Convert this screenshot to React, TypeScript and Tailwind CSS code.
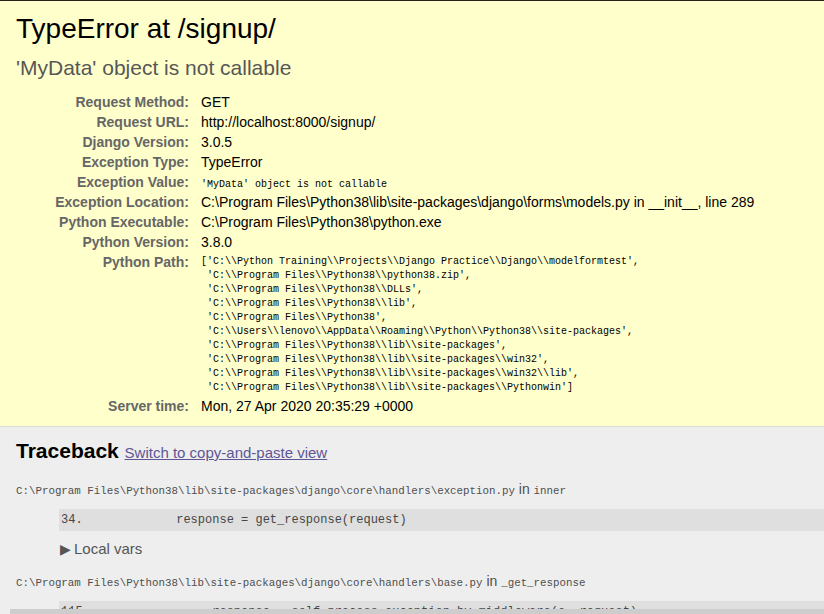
const sans = "font-['Liberation_Sans',Arial,sans-serif]"
const mono = "font-['Liberation_Mono','Courier_New',monospace]"

const summaryRows: { label: string; value: string; mono?: boolean }[] = [
    { label: 'Request Method:', value: 'GET' },
    { label: 'Request URL:', value: 'http://localhost:8000/signup/' },
    { label: 'Django Version:', value: '3.0.5' },
    { label: 'Exception Type:', value: 'TypeError' },
    { label: 'Exception Value:', value: "'MyData' object is not callable", mono: true },
    { label: 'Exception Location:', value: 'C:\\Program Files\\Python38\\lib\\site-packages\\django\\forms\\models.py in __init__, line 289' },
    { label: 'Python Executable:', value: 'C:\\Program Files\\Python38\\python.exe' },
    { label: 'Python Version:', value: '3.8.0' },
]

const pythonPath = [
    "['C:\\\\Python Training\\\\Projects\\\\Django Practice\\\\Django\\\\modelformtest',",
    " 'C:\\\\Program Files\\\\Python38\\\\python38.zip',",
    " 'C:\\\\Program Files\\\\Python38\\\\DLLs',",
    " 'C:\\\\Program Files\\\\Python38\\\\lib',",
    " 'C:\\\\Program Files\\\\Python38',",
    " 'C:\\\\Users\\\\lenovo\\\\AppData\\\\Roaming\\\\Python\\\\Python38\\\\site-packages',",
    " 'C:\\\\Program Files\\\\Python38\\\\lib\\\\site-packages',",
    " 'C:\\\\Program Files\\\\Python38\\\\lib\\\\site-packages\\\\win32',",
    " 'C:\\\\Program Files\\\\Python38\\\\lib\\\\site-packages\\\\win32\\\\lib',",
    " 'C:\\\\Program Files\\\\Python38\\\\lib\\\\site-packages\\\\Pythonwin']",
]

const frames = [
    {
        file: 'C:\\Program Files\\Python38\\lib\\site-packages\\django\\core\\handlers\\exception.py',
        func: 'inner',
        line: '34.',
        code: '             response = get_response(request)',
        vars: true,
    },
    {
        file: 'C:\\Program Files\\Python38\\lib\\site-packages\\django\\core\\handlers\\base.py',
        func: '_get_response',
        line: '115.',
        code: '                 response = self.process_exception_by_middleware(e, request)',
        vars: false,
    },
]

function Row({ label, children }: { label: string; children: React.ReactNode }) {
    return (
        <div className="flex h-[20px] leading-[20px]">
            <div className="w-[189px] shrink-0 text-right font-bold text-[#666] text-[14px]">{label}</div>
            <div className="pl-[12px] text-black">{children}</div>
        </div>
    )
}

export default function App() {
    return (
        <div className={`relative h-[614px] w-[824px] overflow-hidden bg-white ${sans}`}>
            {/* Summary */}
            <div className="border-t border-t-[#28231a] border-b border-b-[#ddd] bg-[#ffc] pt-[12px] pb-[10px]">
                <h1 className="pl-[16px] text-[28px] leading-[32px] font-normal text-black">TypeError at /signup/</h1>
                <h2 className="mt-[11px] pl-[16px] text-[21px] leading-[24px] font-normal text-[#575757]">'MyData' object is not callable</h2>

                <div className="mt-[12px]">
                    {summaryRows.map((row) => (
                        <Row key={row.label} label={row.label}>
                            {row.mono ? (
                                <span className={`${mono} text-[10px] whitespace-pre`}>{row.value}</span>
                            ) : (
                                <span className="text-[14px] whitespace-nowrap">{row.value}</span>
                            )}
                        </Row>
                    ))}
                    <div className="flex leading-[20px]">
                        <div className="w-[189px] shrink-0 text-right font-bold text-[#666] text-[14px]">Python Path:</div>
                        <pre className={`pl-[12px] pt-[3px] pb-[1px] ${mono} text-[10px] leading-[14px] text-black`}>
                            {pythonPath.join('\n')}
                        </pre>
                    </div>
                    <Row label="Server time:">
                        <span className="text-[14px]">Mon, 27 Apr 2020 20:35:29 +0000</span>
                    </Row>
                </div>
            </div>

            {/* Traceback */}
            <div className="bg-[#eee] pt-[12px] h-full">
                <h2 className="pl-[16px] text-[21px] leading-[24px] font-bold text-black">
                    Traceback{' '}
                    <a href="#" className="text-[15px] font-normal text-[#5E5694] underline">Switch to copy-and-paste view</a>
                </h2>

                <ul className="mt-[16px]">
                    {frames.map((f) => (
                        <li key={f.file} className="pb-[16px]">
                            <div className="pl-[16px] leading-[16px] text-[#4f4f4f] whitespace-nowrap">
                                <code className={`${mono} text-[10.8px]`}>{f.file}</code>
                                <span className="text-[14px]"> in </span>
                                <code className={`${mono} text-[10.8px]`}>{f.func}</code>
                            </div>
                            <div className="mt-[10px] ml-[59px] bg-[#dfdfdf] h-[22px] pl-[2px] flex items-center">
                                <pre className={`${mono} text-[12px] leading-[16px] text-[#464646]`}>
                                    {f.line + f.code}
                                </pre>
                            </div>
                            {f.vars && (
                                <div className="mt-[10px] ml-[60px] flex items-center gap-[3px] text-[15px] leading-[16px] text-[#555]">
                                    <span className="text-[14px]">▶</span>
                                    <span>Local vars</span>
                                </div>
                            )}
                        </li>
                    ))}
                </ul>
            </div>

            {/* scrollbar strip at the bottom edge */}
            <div className="absolute left-[10px] right-0 bottom-0 h-[5px] bg-[#cdcdcd]" />
        </div>
    )
}
